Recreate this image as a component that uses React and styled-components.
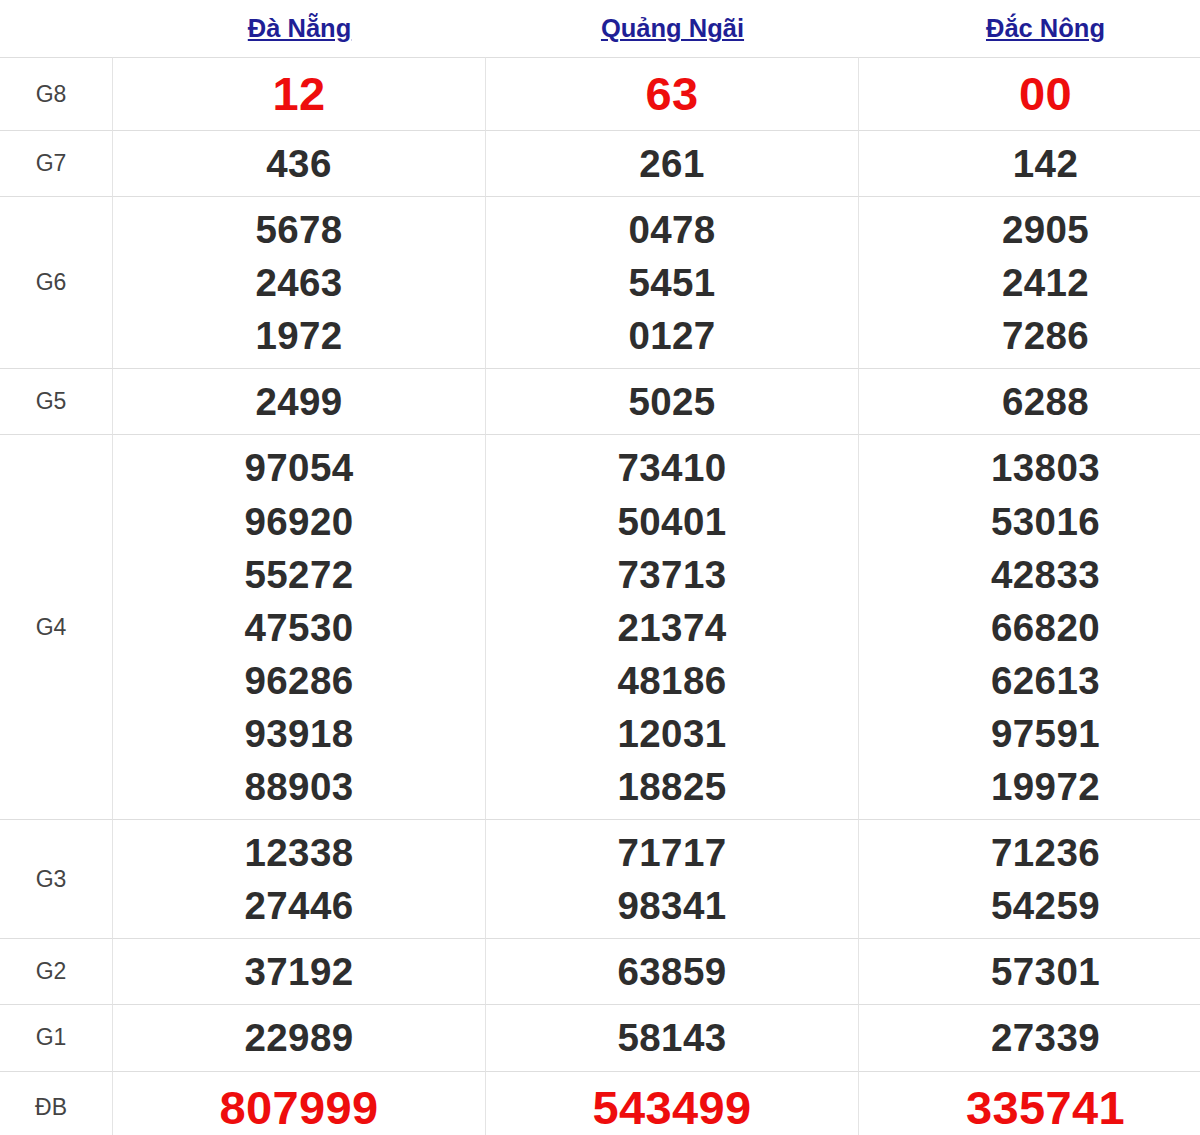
import React from "react";
import styled, { createGlobalStyle } from "styled-components";

const Global = createGlobalStyle`
  html, body {
    margin: 0;
    padding: 0;
    background: #fff;
    overflow: hidden;
  }
  body {
    font-family: "Liberation Sans", Arial, sans-serif;
  }
`;

const Board = styled.div`
  display: grid;
  grid-template-columns: 113px repeat(3, 373px);
  width: 1232px;
  font-family: "Liberation Sans", Arial, sans-serif;
`;

const HeadCell = styled.div`
  height: 57px;
  display: flex;
  align-items: center;
  justify-content: center;
`;

const ProvinceLink = styled.a`
  font-size: 25.5px;
  font-weight: 700;
  color: #1f1f96;
  text-decoration: underline;
  text-underline-offset: 2px;
  text-decoration-thickness: 1.5px;
  cursor: pointer;
`;

const LabelCell = styled.div`
  border-top: 1px solid #dedede;
  border-right: 1px solid #e4e4e4;
  display: flex;
  align-items: center;
  justify-content: center;
  font-size: 23px;
  color: #444;
  padding-right: 10px;
`;

const NumCell = styled.div`
  border-top: 1px solid #dedede;
  border-right: ${(p) => (p.$last ? "none" : "1px solid #e4e4e4")};
  display: flex;
  flex-direction: column;
  align-items: center;
  justify-content: center;
  padding: 6px 0;
`;

const Num = styled.div`
  font-weight: 700;
  font-size: ${(p) => (p.$big ? "47px" : "38.5px")};
  line-height: ${(p) => (p.$big ? "60px" : "53.1px")};
  color: ${(p) => (p.$big ? "#ee0d0d" : "#2e2e2e")};
  letter-spacing: 0.4px;
`;

const provinces = ["Đà Nẵng", "Quảng Ngãi", "Đắc Nông"];

const rows = [
  { label: "G8", big: true, data: [["12"], ["63"], ["00"]] },
  { label: "G7", data: [["436"], ["261"], ["142"]] },
  {
    label: "G6",
    data: [
      ["5678", "2463", "1972"],
      ["0478", "5451", "0127"],
      ["2905", "2412", "7286"],
    ],
  },
  { label: "G5", data: [["2499"], ["5025"], ["6288"]] },
  {
    label: "G4",
    data: [
      ["97054", "96920", "55272", "47530", "96286", "93918", "88903"],
      ["73410", "50401", "73713", "21374", "48186", "12031", "18825"],
      ["13803", "53016", "42833", "66820", "62613", "97591", "19972"],
    ],
  },
  {
    label: "G3",
    data: [
      ["12338", "27446"],
      ["71717", "98341"],
      ["71236", "54259"],
    ],
  },
  { label: "G2", data: [["37192"], ["63859"], ["57301"]] },
  { label: "G1", data: [["22989"], ["58143"], ["27339"]] },
  { label: "ĐB", big: true, data: [["807999"], ["543499"], ["335741"]] },
];

export default function App() {
  return (
    <>
      <Global />
      <Board>
        <HeadCell />
        {provinces.map((p) => (
          <HeadCell key={p}>
            <ProvinceLink>{p}</ProvinceLink>
          </HeadCell>
        ))}
        {rows.map((r) => (
          <React.Fragment key={r.label}>
            <LabelCell>{r.label}</LabelCell>
            {r.data.map((col, i) => (
              <NumCell key={i} $last={i === 2}>
                {col.map((n, j) => (
                  <Num key={j} $big={r.big}>
                    {n}
                  </Num>
                ))}
              </NumCell>
            ))}
          </React.Fragment>
        ))}
      </Board>
    </>
  );
}
